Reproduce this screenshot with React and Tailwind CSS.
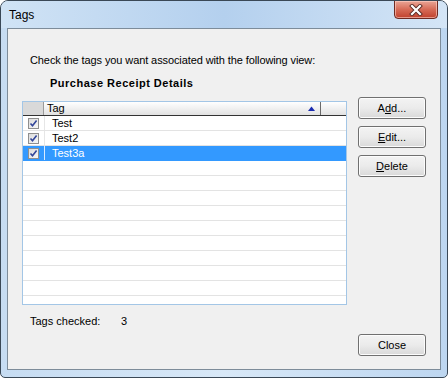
import React from "react";

function Check() {
  return (
    <div className="w-[11px] h-[11px] border border-[#8f8f8f] bg-gradient-to-br from-[#dcdcdc] to-[#f8f8f8] flex items-center justify-center">
      <svg width="9" height="9" viewBox="0 0 9 9">
        <path d="M1.5 4.5 L3.5 6.8 L7.6 1.4" fill="none" stroke="#34479a" strokeWidth="1.6" />
      </svg>
    </div>
  );
}

function Btn({ children, className = "" }) {
  return (
    <div
      className={
        "w-[68px] h-[22px] rounded-[3px] border border-[#707070] bg-gradient-to-b from-[#f3f3f3] via-[#ebebeb] to-[#d9d9d9] shadow-[inset_0_0_0_1px_#fcfcfc] flex items-center justify-center text-[11px] text-black " +
        className
      }
    >
      {children}
    </div>
  );
}

export default function App() {
  const rows = [
    { name: "Test" },
    { name: "Test2" },
    { name: "Test3a", sel: true },
  ];
  const empties = Array.from({ length: 10 });
  return (
    <div
      className="w-[448px] h-[378px] flex flex-col border border-[#3a4856] rounded-t-[8px] rounded-b-[5px] overflow-hidden bg-gradient-to-r from-[#c6dcf2] via-[#d8e8f7] to-[#bdd6f0]"
      style={{ fontFamily: '"Liberation Sans", Arial, sans-serif' }}
    >
      <div className="h-[27px] flex items-start shrink-0 bg-gradient-to-r from-[#d0e3f5] via-[#b4d0ee] to-[#d4e5f6]">
        <div className="ml-[8px] mt-[7px] text-[12px] leading-[14px] text-black">Tags</div>
        <div className="ml-auto mr-[9px] -mt-[1px] w-[44px] h-[19px] rounded-b-[4px] border border-[#6e2a22] bg-gradient-to-b from-[#e9a596] via-[#d66a56] to-[#c0402c] shadow-[inset_0_0_0_1px_rgba(255,210,200,0.6)] flex items-center justify-center">
          <svg width="14" height="12" viewBox="0 0 14 12">
            <path d="M3 2 L11 10 M11 2 L3 10" stroke="#5a2a24" strokeWidth="4" strokeLinecap="square" />
            <path d="M3 2 L11 10 M11 2 L3 10" stroke="#ffffff" strokeWidth="2.2" strokeLinecap="square" />
          </svg>
        </div>
      </div>
      <div className="flex-1 mx-[6px] mb-[7px] border border-[#7d8c9a] bg-[#f0f0f0] flex flex-col text-[11px] leading-[13px] text-black">
        <div className="mt-[25px] pl-[22px] h-[13px] tracking-[-0.1px]">Check the tags you want associated with the following view:</div>
        <div className="mt-[10px] pl-[42px] h-[13px] font-bold tracking-[0.5px]">Purchase Receipt Details</div>
        <div className="mt-[7px] flex items-start">
          <div className="ml-[14px] mt-[4px] w-[325px] h-[204px] border border-[#a3c6e6] bg-white flex flex-col overflow-hidden">
            <div className="h-[15px] shrink-0 flex border-t border-b border-[#333333] -mt-[1px] -mx-[1px] border-r-0">
              <div className="w-[22px] border-l border-[#333] bg-[#d9d9d9] border-r border-r-[#9a9a9a]" />
              <div className="w-[277px] bg-gradient-to-b from-[#ffffff] to-[#e2e2e2] border-r border-[#6a6a6a] flex items-center pl-[3px] relative">
                <span className="leading-[13px]">Tag</span>
                <svg className="ml-auto mr-[5px]" width="7" height="5" viewBox="0 0 7 5">
                  <path d="M0 5 L3.5 0.5 L7 5 Z" fill="#1a2bb0" />
                </svg>
              </div>
              <div className="flex-1 bg-gradient-to-b from-[#ffffff] to-[#e2e2e2] border-r border-[#333]" />
            </div>
            {rows.map((r, i) => (
              <div
                key={i}
                className={
                  "h-[15px] shrink-0 flex items-center border-b " +
                  (r.sel ? "bg-[#3399ff] border-[#3399ff] text-white" : "border-[#e3e3e3]")
                }
              >
                <div className={"w-[22px] h-full flex items-center justify-center border-r " + (r.sel ? "border-[#d9ebff]" : "border-[#e6e6e6]")}>
                  <Check />
                </div>
                <div className="pl-[7px] leading-[13px]">{r.name}</div>
              </div>
            ))}
            {empties.map((_, i) => (
              <div key={"e" + i} className="h-[15px] shrink-0 border-b border-[#e3e3e3]" />
            ))}
          </div>
          <div className="ml-[11px] flex flex-col gap-[7px]">
            <Btn>
              <span>A<u>d</u>d...</span>
            </Btn>
            <Btn>
              <span><u>E</u>dit...</span>
            </Btn>
            <Btn>
              <span><u>D</u>elete</span>
            </Btn>
          </div>
        </div>
        <div className="mt-[10px] h-[13px] flex pl-[22px]">
          <span className="w-[91px]">Tags checked:</span>
          <span>3</span>
        </div>
        <div className="mt-[6px] flex">
          <Btn className="ml-[350px]">Close</Btn>
        </div>
      </div>
    </div>
  );
}
